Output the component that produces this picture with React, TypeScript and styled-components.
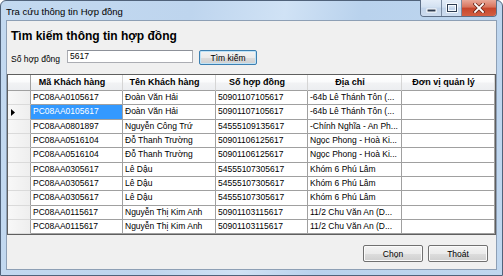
import React from "react";
import styled, { createGlobalStyle } from "styled-components";

const Global = createGlobalStyle`
  html, body { margin: 0; padding: 0; background: #ffffff; }
  body {
    width: 503px; height: 276px; overflow: hidden;
    font-family: "Liberation Sans", Arial, sans-serif;
    color: #000;
  }
  * { box-sizing: border-box; }
`;

const Window = styled.div`
  width: 503px;
  height: 276px;
  display: flex;
  flex-direction: column;
  border: 1px solid #50627a;
  border-radius: 6px 6px 0 0;
  padding: 0 5px 5px 5px;
  background: linear-gradient(100deg, #c3d9f0 0%, #bed5ee 35%, #d0e2f5 52%, #b9d2ed 66%, #c0d7ef 100%);
`;

const TitleBar = styled.div`
  height: 19px;
  display: flex;
  justify-content: space-between;
  align-items: flex-start;
  flex-shrink: 0;
`;

const TitleText = styled.div`
  margin-top: 5px;
  font-size: 9.5px;
  line-height: 11px;
  white-space: nowrap;
`;

const CaptionGroup = styled.div`
  display: flex;
  margin-top: -1px;
  height: 17px;
  border: 1px solid #5d6f87;
  border-top: none;
  border-radius: 0 0 4px 4px;
  overflow: hidden;
`;

const CaptionButton = styled.div<{ $kind: "min" | "max" | "close" }>`
  width: ${(p) => (p.$kind === "close" ? 35 : 20)}px;
  height: 100%;
  display: flex;
  align-items: center;
  justify-content: center;
  border-left: ${(p) => (p.$kind === "min" ? "none" : "1px solid #7b8ca3")};
  background: ${(p) =>
    p.$kind === "close"
      ? "linear-gradient(#e9a898 0%, #d8735c 45%, #c7452b 50%, #d35f43 100%)"
      : "linear-gradient(#e4edf8 0%, #d3e1f1 45%, #c2d4ea 50%, #cddcef 100%)"};
`;

const Client = styled.div`
  flex: 1;
  display: flex;
  flex-direction: column;
  background: #f0f0f0;
  border: 1px solid #8d9fb5;
  padding-top: 8px;
`;

const Heading = styled.div`
  font-size: 12px;
  font-weight: bold;
  line-height: 14px;
  padding-left: 4px;
`;

const SearchRow = styled.div`
  display: flex;
  align-items: flex-start;
  margin-top: 7px;
  padding-left: 4px;
  height: 15px;
`;

const Label = styled.div`
  width: 56px;
  font-size: 8.5px;
  line-height: 15px;
  margin-top: 2px;
  white-space: nowrap;
`;

const TextBox = styled.div`
  width: 126px;
  height: 13px;
  background: #fff;
  border: 1px solid #abadb3;
  border-top-color: #8d9199;
  font-size: 8.5px;
  line-height: 11px;
  padding-left: 2px;
`;

const WinButton = styled.div<{ $default?: boolean }>`
  width: ${(p) => (p.$default ? 58 : 60)}px;
  height: ${(p) => (p.$default ? 15 : 17)}px;
  display: flex;
  align-items: center;
  justify-content: center;
  font-size: 8.5px;
  border-radius: 2px;
  border: 1px solid ${(p) => (p.$default ? "#3c7fb1" : "#707070")};
  background: linear-gradient(#f3f3f3 0%, #ebebeb 50%, #dddddd 51%, #cfcfcf 100%);
  box-shadow: inset 0 0 0 1px ${(p) => (p.$default ? "#bfe3f7" : "#fbfbfb")};
  white-space: nowrap;
`;

const SearchButton = styled(WinButton)`
  margin-left: 6px;
`;

const Grid = styled.div`
  margin-top: 9px;
  border: 1px solid #5f5f5f;
  background: #ffffff;
  display: flex;
  flex-direction: column;
`;

const COLS = "23px 92px 93px 92px 94px 93px";

const HeaderRow = styled.div`
  display: grid;
  grid-template-columns: ${COLS};
  height: 16px;
`;

const HeaderCell = styled.div`
  font-size: 9px;
  font-weight: bold;
  line-height: 15px;
  text-align: center;
  padding-right: 9px;
  white-space: nowrap;
  overflow: hidden;
  background: linear-gradient(#ffffff 0%, #fafbfc 45%, #f1f2f4 55%, #eceef1 100%);
  border-right: 1px solid #d5d5d5;
  border-bottom: 1px solid #a0a0a0;
`;

const Corner = styled(HeaderCell)`
  border-right: 1px solid #a0a0a0;
  padding: 0;
`;

const DataRow = styled.div`
  display: grid;
  grid-template-columns: ${COLS};
  height: 14.35px;
`;

const RowHeader = styled.div`
  display: flex;
  align-items: center;
  padding-left: 3px;
  background: linear-gradient(to right, #f8f8f8, #eeeeee);
  border-right: 1px solid #a0a0a0;
  border-bottom: 1px solid #dadada;
`;

const Cell = styled.div<{ $selected?: boolean }>`
  font-size: 8.5px;
  line-height: 13.35px;
  padding-left: 2px;
  white-space: nowrap;
  overflow: hidden;
  border-right: 1px solid #a0a0a0;
  border-bottom: 1px solid #a0a0a0;
  background: ${(p) => (p.$selected ? "#3399ff" : "#ffffff")};
  color: ${(p) => (p.$selected ? "#ffffff" : "#000000")};
`;

const Footer = styled.div`
  display: flex;
  justify-content: flex-end;
  gap: 5px;
  margin-top: 10px;
  padding-right: 8px;
`;

const rows = [
  ["PC08AA0105617", "Đoàn Văn Hải", "50901107105617", "-64b Lê Thánh Tôn (...", ""],
  ["PC08AA0105617", "Đoàn Văn Hải", "50901107105617", "-64b Lê Thánh Tôn (...", ""],
  ["PC08AA0801897", "Nguyễn Công Trứ", "54555109135617", "-Chính Nghĩa - An Ph...", ""],
  ["PC08AA0516104", "Đỗ Thanh Trường", "50901106125617", "Ngọc Phong - Hoà Ki...", ""],
  ["PC08AA0516104", "Đỗ Thanh Trường", "50901106125617", "Ngọc Phong - Hoà Ki...", ""],
  ["PC08AA0305617", "Lê Dậu", "54555107305617", "Khóm 6  Phú Lâm", ""],
  ["PC08AA0305617", "Lê Dậu", "54555107305617", "Khóm 6  Phú Lâm", ""],
  ["PC08AA0305617", "Lê Dậu", "54555107305617", "Khóm 6  Phú Lâm", ""],
  ["PC08AA0115617", "Nguyễn Thị Kim Anh", "50901103115617", "11/2 Chu Văn An (D...", ""],
  ["PC08AA0115617", "Nguyễn Thị Kim Anh", "50901103115617", "11/2 Chu Văn An (D...", ""],
];

const headers = ["Mã Khách hàng", "Tên Khách hàng", "Số hợp đồng", "Địa chỉ", "Đơn vị quản lý"];

export default function App() {
  return (
    <>
      <Global />
      <Window>
        <TitleBar>
          <TitleText>Tra cứu thông tin Hợp đồng</TitleText>
          <CaptionGroup>
            <CaptionButton $kind="min">
              <svg width="11" height="12" viewBox="0 0 11 12">
                <rect x="1" y="7" width="9" height="3" fill="#2e3d52" stroke="#ffffff" strokeWidth="1" />
              </svg>
            </CaptionButton>
            <CaptionButton $kind="max">
              <svg width="12" height="10" viewBox="0 0 12 10">
                <rect x="1.5" y="1.5" width="9" height="7" fill="none" stroke="#ffffff" strokeWidth="2.6" />
                <rect x="1.5" y="1.5" width="9" height="7" fill="none" stroke="#2e3d52" strokeWidth="1" />
              </svg>
            </CaptionButton>
            <CaptionButton $kind="close">
              <svg width="12" height="10" viewBox="0 0 12 10">
                <path d="M2 1 L10 9 M10 1 L2 9" stroke="#6b2a1e" strokeWidth="3.4" strokeLinecap="square" />
                <path d="M2 1 L10 9 M10 1 L2 9" stroke="#ffffff" strokeWidth="1.8" strokeLinecap="square" />
              </svg>
            </CaptionButton>
          </CaptionGroup>
        </TitleBar>
        <Client>
          <Heading>Tìm kiếm thông tin hợp đồng</Heading>
          <SearchRow>
            <Label>Số hợp đồng</Label>
            <TextBox>5617</TextBox>
            <SearchButton $default>Tìm kiếm</SearchButton>
          </SearchRow>
          <Grid>
            <HeaderRow>
              <Corner />
              {headers.map((h) => (
                <HeaderCell key={h}>{h}</HeaderCell>
              ))}
            </HeaderRow>
            {rows.map((r, i) => (
              <DataRow key={i}>
                <RowHeader>
                  {i === 1 && (
                    <svg width="4" height="7" viewBox="0 0 4 7">
                      <polygon points="0,0 4,3.5 0,7" fill="#000" />
                    </svg>
                  )}
                </RowHeader>
                {r.map((c, j) => (
                  <Cell key={j} $selected={i === 1 && j === 0}>
                    {c}
                  </Cell>
                ))}
              </DataRow>
            ))}
          </Grid>
          <Footer>
            <WinButton>Chọn</WinButton>
            <WinButton>Thoát</WinButton>
          </Footer>
        </Client>
      </Window>
    </>
  );
}
